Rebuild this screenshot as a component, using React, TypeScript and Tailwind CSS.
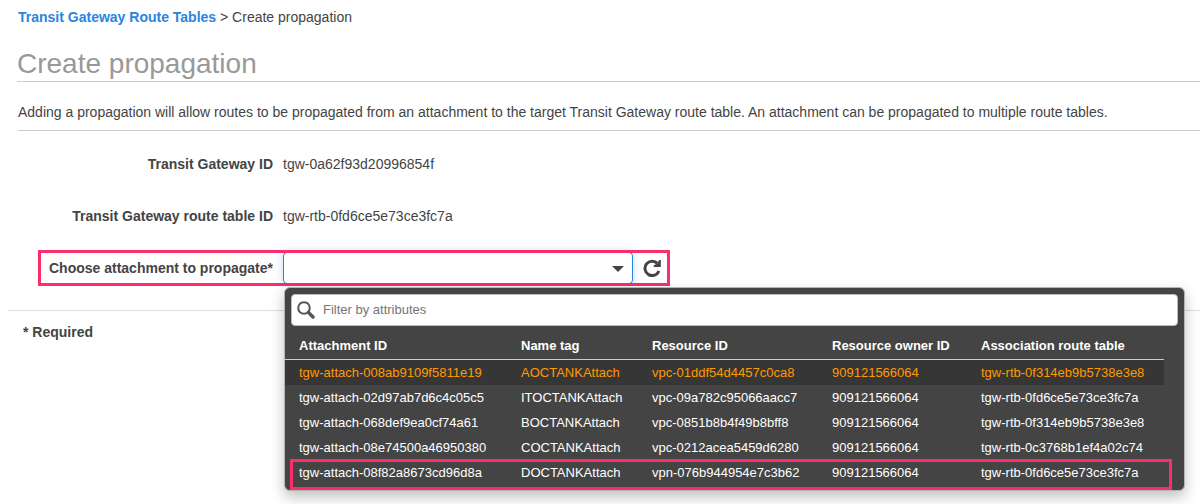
import { useId } from "react";

type Attachment = {
  id: string;
  name: string;
  resource: string;
  owner: string;
  routeTable: string;
};

const attachments: Attachment[] = [
  { id: "tgw-attach-008ab9109f5811e19", name: "AOCTANKAttach", resource: "vpc-01ddf54d4457c0ca8", owner: "909121566064", routeTable: "tgw-rtb-0f314eb9b5738e3e8" },
  { id: "tgw-attach-02d97ab7d6c4c05c5", name: "ITOCTANKAttach", resource: "vpc-09a782c95066aacc7", owner: "909121566064", routeTable: "tgw-rtb-0fd6ce5e73ce3fc7a" },
  { id: "tgw-attach-068def9ea0cf74a61", name: "BOCTANKAttach", resource: "vpc-0851b8b4f49b8bff8", owner: "909121566064", routeTable: "tgw-rtb-0f314eb9b5738e3e8" },
  { id: "tgw-attach-08e74500a46950380", name: "COCTANKAttach", resource: "vpc-0212acea5459d6280", owner: "909121566064", routeTable: "tgw-rtb-0c3768b1ef4a02c74" },
  { id: "tgw-attach-08f82a8673cd96d8a", name: "DOCTANKAttach", resource: "vpn-076b944954e7c3b62", owner: "909121566064", routeTable: "tgw-rtb-0fd6ce5e73ce3fc7a" },
];

const hovered = 0;
const marked = 4;

function SearchIcon() {
  return (
    <svg viewBox="0 0 18 18" className="h-[18px] w-[18px] shrink-0 text-[#555]" aria-hidden="true">
      <circle cx="7" cy="7" r="5.8" fill="none" stroke="currentColor" strokeWidth="2" />
      <path d="M11.4 11.4L16 16" stroke="currentColor" strokeWidth="3.4" strokeLinecap="round" />
    </svg>
  );
}

function RefreshIcon() {
  return (
    <svg viewBox="0 0 18 18" className="h-[18px] w-[18px]" aria-hidden="true">
      <path d="M14.4 4.4A7.2 7.2 0 1 0 15.9 12" fill="none" stroke="currentColor" strokeWidth="3" />
      <path d="M17.8 1V8H10.8V6.2L14.6 4.6L16 1Z" fill="currentColor" />
    </svg>
  );
}

function AttachmentMenu() {
  return (
    <div className="absolute top-full left-0 z-10 mt-[3px] ml-px w-[901px] rounded-md border border-[#b5b5b5] bg-[#444] pt-[6px] pb-[5px] text-white shadow-[0_6px_14px_rgba(0,0,0,0.25)]">
      <div className="mx-[6px] flex h-8 items-center gap-2 rounded-[4px] border border-[#bbb] bg-white px-[5px]">
        <SearchIcon />
        <input
          type="text"
          aria-label="Filter by attributes"
          placeholder="Filter by attributes"
          className="min-w-0 flex-1 bg-transparent text-[13px] text-[#444] outline-none placeholder:text-[#757575]"
        />
      </div>
      <div className="mt-[6px] pr-5">
        <table className="w-full table-fixed border-collapse text-left text-[13px] leading-[25px]">
          <colgroup>
            <col className="w-[222px]" />
            <col className="w-[131px]" />
            <col className="w-[180px]" />
            <col className="w-[149px]" />
            <col />
          </colgroup>
          <thead>
            <tr className="h-[27px] border-b border-[#ccc]">
              {["Attachment ID", "Name tag", "Resource ID", "Resource owner ID", "Association route table"].map((h) => (
                <th key={h} scope="col" className="p-0 pl-[14px] font-bold whitespace-nowrap">{h}</th>
              ))}
            </tr>
          </thead>
          <tbody>
            {attachments.map((a, i) => (
              <tr key={a.id} className={i === hovered ? "relative bg-[#363636] text-[#ff9900]" : "relative"}>
                <td className="p-0 pl-[14px] whitespace-nowrap">{a.id}</td>
                <td className="p-0 pl-[14px] whitespace-nowrap">{a.name}</td>
                <td className="p-0 pl-[14px] whitespace-nowrap">{a.resource}</td>
                <td className="p-0 pl-[14px] whitespace-nowrap">{a.owner}</td>
                <td className="p-0 pl-[14px] whitespace-nowrap">
                  {a.routeTable}
                  {i === marked && (
                    <span className="pointer-events-none absolute top-[-1px] -right-2 bottom-[-5px] left-[5px] border-3 border-[#fb2d6b]" />
                  )}
                </td>
              </tr>
            ))}
          </tbody>
        </table>
      </div>
    </div>
  );
}

export default function App() {
  const selectId = useId();
  return (
    <main className="min-h-screen overflow-x-hidden bg-white pb-10 font-['Liberation_Sans',Arial,sans-serif] text-sm text-[#444]">
      <nav aria-label="Breadcrumb" className="pt-[7px] pl-[18px]">
        <a href="#route-tables" className="font-bold text-[#2a85e0]">Transit Gateway Route Tables</a>
        {" > "}
        <span>Create propagation</span>
      </nav>
      <h1 className="mt-5 ml-[17px] border-b border-[#ccc] text-[28px] leading-[34px] text-[#999]">Create propagation</h1>
      <p className="ml-[18px] border-b border-[#ccc] pt-5 pb-2">
        Adding a propagation will allow routes to be propagated from an attachment to the target Transit Gateway route table. An attachment can be propagated to multiple route tables.
      </p>

      <dl>
        <div className="mt-[15px] flex h-9 items-center gap-[10px]">
          <dt className="w-[273px] text-right font-bold">Transit Gateway ID</dt>
          <dd>tgw-0a62f93d20996854f</dd>
        </div>
        <div className="mt-4 flex h-9 items-center gap-[10px]">
          <dt className="w-[273px] text-right font-bold">Transit Gateway route table ID</dt>
          <dd>tgw-rtb-0fd6ce5e73ce3fc7a</dd>
        </div>
      </dl>

      <div className="relative mt-4 ml-[38px] flex h-9 w-fit items-center">
        <label htmlFor={selectId} className="w-[235px] text-right font-bold">Choose attachment to propagate*</label>
        <div className="relative ml-[10px]">
          <select
            id={selectId}
            className="block h-8 w-[350px] appearance-none rounded-[4px] border border-[#2a85e0] bg-white shadow-[0_0_8px_rgba(42,133,224,0.3)] outline-none"
          >
            <option value=""></option>
            {attachments.map((a) => (
              <option key={a.id} value={a.id}>{a.id}</option>
            ))}
          </select>
          <svg viewBox="0 0 12 6" className="pointer-events-none absolute top-[14px] right-[9px] h-[6px] w-3" aria-hidden="true">
            <path d="M0 0H12L6 6Z" fill="currentColor" />
          </svg>
          <AttachmentMenu />
        </div>
        <button type="button" aria-label="Refresh" className="mr-[9px] ml-[10px]">
          <RefreshIcon />
        </button>
        <span className="pointer-events-none absolute inset-0 border-3 border-[#fb2d6b]" />
      </div>

      <div className="mt-6 ml-2 border-t border-[#ddd] pt-[11px] pl-[15px] font-bold">* Required</div>
    </main>
  );
}
